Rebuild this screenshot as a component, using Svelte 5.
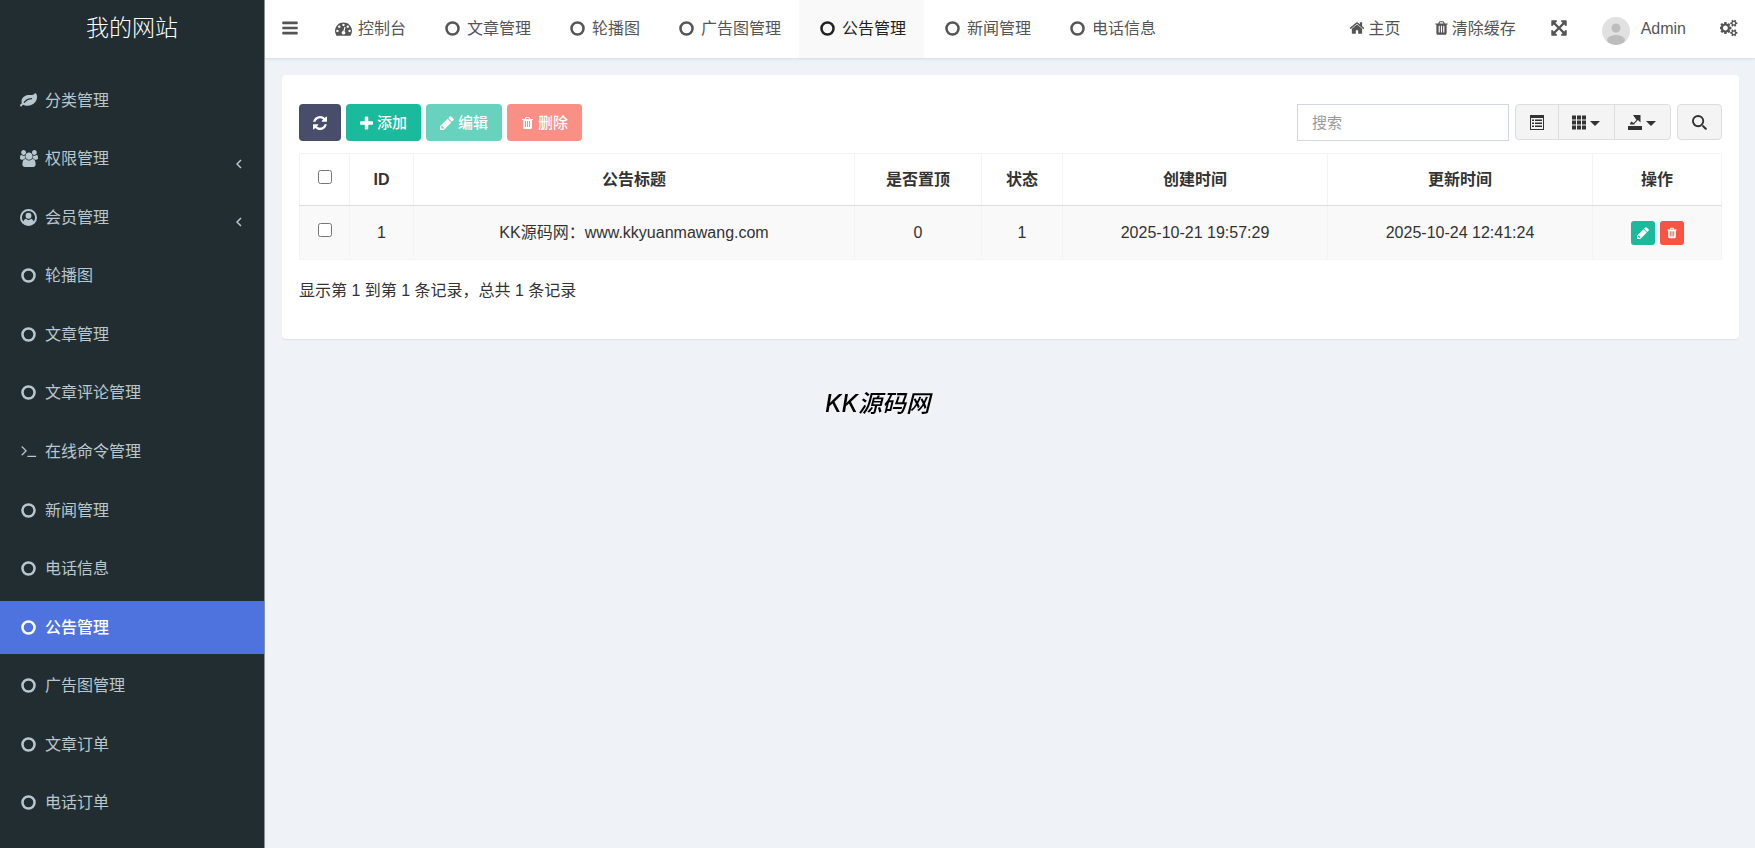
<!-- src/lib/components/NoticeAdmin.svelte -->
<script lang="ts">
  interface MenuItem {
    label: string;
    icon: string;
    children?: boolean;
  }

  interface Notice {
    id: number;
    title: string;
    top: number;
    status: number;
    created: string;
    updated: string;
  }

  const MENU: MenuItem[] = [
    { label: '分类管理', icon: 'leaf' },
    { label: '权限管理', icon: 'group', children: true },
    { label: '会员管理', icon: 'user', children: true },
    { label: '轮播图', icon: 'circle' },
    { label: '文章管理', icon: 'circle' },
    { label: '文章评论管理', icon: 'circle' },
    { label: '在线命令管理', icon: 'terminal' },
    { label: '新闻管理', icon: 'circle' },
    { label: '电话信息', icon: 'circle' },
    { label: '公告管理', icon: 'circle' },
    { label: '广告图管理', icon: 'circle' },
    { label: '文章订单', icon: 'circle' },
    { label: '电话订单', icon: 'circle' },
  ];

  const TABS: MenuItem[] = [
    { label: '控制台', icon: 'dashboard' },
    { label: '文章管理', icon: 'circle' },
    { label: '轮播图', icon: 'circle' },
    { label: '广告图管理', icon: 'circle' },
    { label: '公告管理', icon: 'circle' },
    { label: '新闻管理', icon: 'circle' },
    { label: '电话信息', icon: 'circle' },
  ];

  const rows: Notice[] = [
    {
      id: 1,
      title: 'KK源码网：www.kkyuanmawang.com',
      top: 0,
      status: 1,
      created: '2025-10-21 19:57:29',
      updated: '2025-10-24 12:41:24',
    },
  ];

  let current = $state('公告管理');
  let keyword = $state('');
  let selected = $state<number[]>([]);

  const allSelected = $derived(selected.length === rows.length);

  function toggleAll() {
    selected = allSelected ? [] : rows.map((r) => r.id);
  }

  // Icon outlines on a 1792 unit grid
  const ICONS: Record<string, { box?: string; d: string }> = {
    leaf: {
      d: 'M1280 704q0-26-19-45t-45-19q-172 0-318 49.5t-259.5 134-235.5 219.5q-19 21-19 45 0 26 19 45t45 19q24 0 45-19 27-24 74-71t67-66q137-124 268.5-176t313.5-52q26 0 45-19t19-45zm512-198q0 95-20 193-46 224-184.5 383t-357.5 268q-214 108-438 108-148 0-286-47-15-5-88-42t-96-37q-16 0-39.5 32t-45 70-52.5 70-60 32q-43 0-63.5-17.5t-45.5-59.5q-2-4-6-11t-5.5-10-3-9.5-1.5-13.5q0-35 31-73.5t68-65.5 68-56 31-48q0-4-14-38t-16-44q-9-51-9-104 0-115 43.5-220t119-184.5 170.5-139 204-95.5q55-18 145-25.5t179.5-9 178.5-6 163.5-24 113.5-56.5l29.5-29.5 29.5-28 27-20 36.5-16 43.5-4.5q39 0 70.5 46t47.5 112 24 124 8 96z',
    },
    group: {
      box: '64 0 1920 1792',
      d: 'M657 896q-162 5-265 128h-134q-82 0-138-40.5t-56-118.5q0-353 124-353 6 0 43.5 21t97.5 42.5 119 21.5q67 0 133-23-5 37-5 66 0 139 81 256zm1071 637q0 120-73 189.5t-194 69.5h-874q-121 0-194-69.5t-73-189.5q0-53 3.5-103.5t14-109 26.5-108.5 43-97.5 62-81 85.5-53.5 111.5-20q10 0 43 21.5t73 48 107 48 135 21.5 135-21.5 107-48 73-48 43-21.5q61 0 111.5 20t85.5 53.5 62 81 43 97.5 26.5 108.5 14 109 3.5 103.5zm-1024-1277q0 106-75 181t-181 75-181-75-75-181 75-181 181-75 181 75 75 181zm704 384q0 159-112.5 271.5t-271.5 112.5-271.5-112.5-112.5-271.5 112.5-271.5 271.5-112.5 271.5 112.5 112.5 271.5zm576 225q0 78-56 118.5t-138 40.5h-134q-103-123-265-128 81-117 81-256 0-29-5-66 66 23 133 23 59 0 119-21.5t97.5-42.5 43.5-21q124 0 124 353zm-128-609q0 106-75 181t-181 75-181-75-75-181 75-181 181-75 181 75 75 181z',
    },
    user: {
      d: 'M896 0a896 896 0 1 0 0 1792a896 896 0 1 0 0-1792zM896 210a686 686 0 0 1 530 1120c-40-160-130-260-270-290a370 370 0 0 1-520 0c-140 30-230 130-270 290a686 686 0 0 1 530-1120zM896 400a310 320 0 1 0 0 640a310 320 0 1 0 0-640z',
    },
    circle: {
      d: 'M896 128a768 768 0 1 0 0 1536a768 768 0 1 0 0-1536zM896 392a504 504 0 1 1 0 1008a504 504 0 1 1 0-1008z',
    },
    terminal: {
      d: 'M130 420l80-80q24-20 48 0l465 465q24 24 0 48l-465 465q-24 20-48 0l-50-50q-24-24 0-48l391-391-391-391q-24-20-30-18zM1700 1376v64q0 32-32 32h-860q-32 0-32-32v-64q0-32 32-32h860q32 0 32 32z',
    },
    bars: {
      d: 'M1664 1344v128q0 26-19 45t-45 19h-1408q-26 0-45-19t-19-45v-128q0-26 19-45t45-19h1408q26 0 45 19t19 45zm0-512v128q0 26-19 45t-45 19h-1408q-26 0-45-19t-19-45v-128q0-26 19-45t45-19h1408q26 0 45 19t19 45zm0-512v128q0 26-19 45t-45 19h-1408q-26 0-45-19t-19-45v-128q0-26 19-45t45-19h1408q26 0 45 19t19 45z',
    },
    dashboard: {
      d: 'M384 1152q0-53-37.5-90.5t-90.5-37.5-90.5 37.5-37.5 90.5 37.5 90.5 90.5 37.5 90.5-37.5 37.5-90.5zm192-448q0-53-37.5-90.5t-90.5-37.5-90.5 37.5-37.5 90.5 37.5 90.5 90.5 37.5 90.5-37.5 37.5-90.5zm428 481l101-382q6-26-7.5-48.5t-38.5-29.5-48 6.5-30 39.5l-101 382q-60 5-107 43.5t-63 98.5q-20 77 20 146t117 89 146-20 89-117q16-60-6-117t-72-91zm660-33q0-53-37.5-90.5t-90.5-37.5-90.5 37.5-37.5 90.5 37.5 90.5 90.5 37.5 90.5-37.5 37.5-90.5zm-640-640q0-53-37.5-90.5t-90.5-37.5-90.5 37.5-37.5 90.5 37.5 90.5 90.5 37.5 90.5-37.5 37.5-90.5zm448 192q0-53-37.5-90.5t-90.5-37.5-90.5 37.5-37.5 90.5 37.5 90.5 90.5 37.5 90.5-37.5 37.5-90.5zm320 448q0 261-141 483-19 29-54 29h-1402q-35 0-54-29-141-221-141-483 0-182 71-348t191-286 286-191 348-71 348 71 286 191 191 286 71 348z',
    },
    home: {
      d: 'M1472 992v480q0 26-19 45t-45 19h-384v-384h-256v384h-384q-26 0-45-19t-19-45v-480q0-1 .5-3t.5-3l575-474 575 474q1 2 1 6zm223-69l-62 74q-8 9-21 11h-3q-13 0-21-7l-692-577-692 577q-12 8-24 7-13-2-21-11l-62-74q-8-10-7-23.5t11-21.5l719-599q32-26 76-26t76 26l244 204v-195q0-14 9-23t23-9h192q14 0 23 9t9 23v408l219 182q10 8 11 21.5t-7 23.5z',
    },
    trash: {
      box: '192 0 1408 1792',
      d: 'M704 1376v-704q0-14-9-23t-23-9h-64q-14 0-23 9t-9 23v704q0 14 9 23t23 9h64q14 0 23-9t9-23zm256 0v-704q0-14-9-23t-23-9h-64q-14 0-23 9t-9 23v704q0 14 9 23t23 9h64q14 0 23-9t9-23zm256 0v-704q0-14-9-23t-23-9h-64q-14 0-23 9t-9 23v704q0 14 9 23t23 9h64q14 0 23-9t9-23zm-544-992h448l-48-117q-7-9-17-11h-317q-10 2-17 11zm928 32v64q0 14-9 23t-23 9h-96v948q0 83-47 143.5t-113 60.5h-832q-66 0-113-58.5t-47-141.5v-952h-96q-14 0-23-9t-9-23v-64q0-14 9-23t23-9h309l70-167q15-37 54-63t79-26h320q40 0 79 26t54 63l70 167h309q14 0 23 9t9 23z',
    },
    expand: {
      d: 'M1411 541l-355 355 355 355 144-144q29-31 70-14 39 17 39 59v448q0 26-19 45t-45 19h-448q-42 0-59-40-17-39 14-69l144-144-355-355-355 355 144 144q31 30 14 69-17 40-59 40h-448q-26 0-45-19t-19-45v-448q0-42 40-59 39-17 69 14l144 144 355-355-355-355-144 144q-19 19-45 19-12 0-24-5-40-17-40-59v-448q0-26 19-45t45-19h448q42 0 59 40 17 39-14 69l-144 144 355 355 355-355-144-144q-31-30-14-69 17-40 59-40h448q26 0 45 19t19 45v448q0 42-39 59-13 5-25 5-26 0-45-19z',
    },
    cogs: {
      box: '0 0 1920 1792',
      d: 'M832 896q0-106-75-181t-181-75-181 75-75 181 75 181 181 75 181-75 75-181zm768 512q0-52-38-90t-90-38-90 38-38 90q0 53 37.5 90.5t90.5 37.5 90.5-37.5 37.5-90.5zm0-1024q0-52-38-90t-90-38-90 38-38 90q0 53 37.5 90.5t90.5 37.5 90.5-37.5 37.5-90.5zm-384 421v185q0 10-7 19.5t-16 10.5l-155 24q-11 35-32 76 34 48 90 115 7 11 7 20 0 12-7 19-23 30-82.5 89.5t-78.5 59.5q-11 0-21-7l-115-90q-37 19-77 31-11 108-23 155-7 24-30 24h-186q-11 0-20-7.5t-10-17.5l-23-153q-34-10-75-31l-118 89q-7 7-20 7-11 0-21-8-144-133-144-160 0-9 7-19 10-14 41-53t47-61q-23-44-35-82l-152-24q-10-1-17-9.5t-7-19.5v-185q0-10 7-19.5t16-10.5l155-24q11-35 32-76-34-48-90-115-7-11-7-20 0-12 7-20 22-30 82-89t79-59q11 0 21 7l115 90q34-18 77-32 11-108 23-154 7-24 30-24h186q11 0 20 7.5t10 17.5l23 153q34 10 75 31l118-89q8-7 20-7 11 0 21 8 144 133 144 160 0 8-7 19-12 16-42 54t-45 60q23 48 34 82l152 23q10 2 17 10.5t7 19.5zm640 533v140q0 16-149 31-12 27-30 52 51 113 51 138 0 4-4 7-122 71-124 71-8 0-46-47t-52-68q-20 2-30 2t-30-2q-14 21-52 68t-46 47q-2 0-124-71-4-3-4-7 0-25 51-138-18-25-30-52-149-15-149-31v-140q0-16 149-31 13-29 30-52-51-113-51-138 0-4 4-7 4-2 35-20t59-34 30-16q8 0 46 46.5t52 67.5q20-2 30-2t30 2q51-71 92-112l6-2q4 0 124 70 4 3 4 7 0 25-51 138 17 23 30 52 149 15 149 31zm0-1024v140q0 16-149 31-12 27-30 52 51 113 51 138 0 4-4 7-122 71-124 71-8 0-46-47t-52-68q-20 2-30 2t-30-2q-14 21-52 68t-46 47q-2 0-124-71-4-3-4-7 0-25 51-138-18-25-30-52-149-15-149-31v-140q0-16 149-31 13-29 30-52-51-113-51-138 0-4 4-7 4-2 35-20t59-34 30-16q8 0 46 46.5t52 67.5q20-2 30-2t30 2q51-71 92-112l6-2q4 0 124 70 4 3 4 7 0 25-51 138 17 23 30 52 149 15 149 31z',
    },
    refresh: {
      box: '128 128 1536 1536',
      d: 'M1639 1056q0 5-1 7-64 268-268 434.5t-478 166.5q-146 0-282.5-55t-243.5-157l-129 129q-19 19-45 19t-45-19-19-45v-448q0-26 19-45t45-19h448q26 0 45 19t19 45-19 45l-137 137q71 66 161 102t187 36q134 0 250-65t186-179q11-17 53-117 8-23 30-23h192q13 0 22.5 9.5t9.5 22.5zm25-800v448q0 26-19 45t-45 19h-448q-26 0-45-19t-19-45 19-45l138-138q-148-137-349-137-134 0-250 65t-186 179q-11 17-53 117-8 23-30 23h-199q-13 0-22.5-9.5t-9.5-22.5v-7q65-268 270-434.5t480-166.5q146 0 284 55.5t245 156.5l130-129q19-19 45-19t45 19 19 45z',
    },
    plus: {
      box: '192 128 1408 1408',
      d: 'M1600 736v192q0 40-28 68t-68 28h-416v416q0 40-28 68t-68 28h-192q-40 0-68-28t-28-68v-416h-416q-40 0-68-28t-28-68v-192q0-40 28-68t68-28h416v-416q0-40 28-68t68-28h192q40 0 68 28t28 68v416h416q40 0 68 28t28 68z',
    },
    pencil: {
      box: '128 128 1536 1536',
      d: 'M491 1536l91-91-235-235-91 91v107h128v128h107zM960 416l416 416-832 832h-416v-416zm683 96q0 53-37 90l-166 166-416-416 166-165q36-38 90-38 53 0 91 38l235 234q37 39 37 91z',
    },
    // Toolbar glyphs use a 14 unit grid
    detail: {
      box: '0 0 14 15',
      d: 'M0 0h14v15h-14zM1 3v11h12v-11zM2 4.500h2v1.500h-2zM5 4.500h7v1.500h-7zM2 7.500h2v1.500h-2zM5 7.500h7v1.500h-7zM2 10.500h2v1.500h-2zM5 10.500h7v1.500h-7z',
    },
    columns: {
      box: '0 0 14 14',
      d: 'M0 0h4v4h-4zM5 0h4v4h-4zM10 0h4v4h-4zM0 5h4v4h-4zM5 5h4v4h-4zM10 5h4v4h-4zM0 10h4v4h-4zM5 10h4v4h-4zM10 10h4v4h-4z',
    },
    export: {
      box: '0 0 14 15',
      d: 'M0 11h14v4h-14zM5 0h7.500v7.500l-2.500-2.500l-3.500 3.500v1h-4.500q0-2 1.500-3l2 1.500l3-3z',
    },
    search: {
      box: '0 0 16 16',
      d: 'M6.500 0a6.500 6.500 0 1 0 0 13a6.500 6.500 0 1 0 0-13zM6.500 2a4.500 4.500 0 1 1 0 9a4.500 4.500 0 1 1 0-9zM10 11.500l1.500-1.500l4 3.800q.8 1 0 1.700t-1.700 0z',
    },
  };
</script>

{#snippet icon(name: string)}
  <svg class="icon icon-{name}" viewBox={ICONS[name].box ?? '0 0 1792 1792'} aria-hidden="true">
    <path d={ICONS[name].d} fill="currentColor" fill-rule="evenodd" />
  </svg>
{/snippet}

<div class="app">
  <aside class="sidebar">
    <a class="logo" href="#home">我的网站</a>
    <nav class="menu" aria-label="菜单">
      {#each MENU as item (item.label)}
        <a
          class="menu-item"
          class:active={current === item.label}
          href="#{item.label}"
          onclick={() => (current = item.label)}
        >
          <span class="menu-icon">{@render icon(item.icon)}</span>
          <span class="menu-label">{item.label}</span>
          {#if item.children}
            <svg class="angle" viewBox="0 0 6 10" aria-hidden="true">
              <path d="M5 1L1 5l4 4" fill="none" stroke="currentColor" stroke-width="1.5" />
            </svg>
          {/if}
        </a>
      {/each}
    </nav>
  </aside>

  <div class="page">
    <header class="navbar">
      <button class="toggle" type="button" aria-label="切换菜单">{@render icon('bars')}</button>
      <nav class="tabs" aria-label="标签页">
        {#each TABS as tab (tab.label)}
          <a
            class="tab"
            class:active={current === tab.label}
            href="#{tab.label}"
            onclick={() => (current = tab.label)}
          >
            <span class="tab-icon">{@render icon(tab.icon)}</span>
            {tab.label}
          </a>
        {/each}
      </nav>
      <div class="nav-right">
        <a class="nav-link" href="#index">{@render icon('home')}主页</a>
        <a class="nav-link" href="#wipe">{@render icon('trash')}清除缓存</a>
        <button class="nav-link" type="button" aria-label="全屏">{@render icon('expand')}</button>
        <a class="nav-link user" href="#profile">
          <svg class="avatar" viewBox="0 0 28 28" aria-hidden="true">
            <clipPath id="avatar-clip"><circle cx="14" cy="14" r="14" /></clipPath>
            <g clip-path="url(#avatar-clip)">
              <rect width="28" height="28" fill="#e1e1e1" />
              <circle cx="14" cy="11" r="4.500" fill="#bdbdbd" />
              <ellipse cx="14" cy="23" rx="9" ry="5" fill="#bdbdbd" />
            </g>
          </svg>
          Admin
        </a>
        <button class="nav-link" type="button" aria-label="设置">{@render icon('cogs')}</button>
      </div>
    </header>

    <main class="content">
      <section class="panel">
        <div class="toolbar">
          <div class="actions">
            <button class="btn btn-primary" type="button" aria-label="刷新">{@render icon('refresh')}</button>
            <button class="btn btn-success" type="button">{@render icon('plus')}添加</button>
            <button class="btn btn-success" type="button" disabled={selected.length === 0}>
              {@render icon('pencil')}编辑
            </button>
            <button class="btn btn-danger" type="button" disabled={selected.length === 0}>
              {@render icon('trash')}删除
            </button>
          </div>
          <div class="tools">
            <input class="search" type="text" placeholder="搜索" aria-label="搜索" bind:value={keyword} />
            <div class="btn-group">
              <button class="btn-default" type="button" aria-label="切换">{@render icon('detail')}</button>
              <button class="btn-default" type="button" aria-label="列">
                {@render icon('columns')}<span class="caret"></span>
              </button>
              <button class="btn-default" type="button" aria-label="导出数据">
                {@render icon('export')}<span class="caret"></span>
              </button>
            </div>
            <button class="btn-default btn-search" type="button" aria-label="普通搜索">
              {@render icon('search')}
            </button>
          </div>
        </div>

        <table class="table">
          <colgroup>
            <col class="col-check" />
            <col class="col-id" />
            <col />
            <col class="col-top" />
            <col class="col-status" />
            <col class="col-time" />
            <col class="col-time" />
            <col class="col-operate" />
          </colgroup>
          <thead>
            <tr>
              <th><input type="checkbox" aria-label="全选" checked={allSelected} onchange={toggleAll} /></th>
              <th>ID</th>
              <th>公告标题</th>
              <th>是否置顶</th>
              <th>状态</th>
              <th>创建时间</th>
              <th>更新时间</th>
              <th>操作</th>
            </tr>
          </thead>
          <tbody>
            {#each rows as row (row.id)}
              <tr>
                <td>
                  <input type="checkbox" aria-label="选择 {row.id}" value={row.id} bind:group={selected} />
                </td>
                <td>{row.id}</td>
                <td>{row.title}</td>
                <td>{row.top}</td>
                <td>{row.status}</td>
                <td>{row.created}</td>
                <td>{row.updated}</td>
                <td>
                  <div class="operate">
                    <button class="btn-xs btn-success" type="button" aria-label="编辑">{@render icon('pencil')}</button>
                    <button class="btn-xs btn-danger" type="button" aria-label="删除">{@render icon('trash')}</button>
                  </div>
                </td>
              </tr>
            {/each}
          </tbody>
        </table>

        <p class="pagination-info">显示第 1 到第 {rows.length} 条记录，总共 {rows.length} 条记录</p>
      </section>
    </main>
  </div>

  <div class="watermark">KK源码网</div>
</div>

<style>
  :global(body) {
    background: #eff3f7;
  }

  .app {
    display: flex;
    min-height: 100vh;
    font-family: 'Liberation Sans', 'Noto Sans CJK SC', sans-serif;
    font-size: 16px;
    line-height: 24px;
    color: #333;
  }

  .app * {
    box-sizing: border-box;
  }

  a {
    color: inherit;
    text-decoration: none;
  }

  button {
    font: inherit;
    cursor: pointer;
  }

  .icon {
    display: block;
    flex: none;
    width: 16px;
    height: 16px;
  }

  /* ── Sidebar ── */
  .sidebar {
    display: flex;
    flex-direction: column;
    flex: none;
    width: 265px;
    padding-bottom: 18px;
    background: #222d32;
    border-right: 1px solid #8a9195;
    color: #b8c7ce;
  }

  .logo {
    height: 58px;
    line-height: 56px;
    font-size: 23px;
    font-weight: 300;
    text-align: center;
    color: #fff;
  }

  .menu {
    display: flex;
    flex: 1;
    flex-direction: column;
    justify-content: space-between;
    gap: 4px;
    padding-top: 16px;
  }

  .menu-item {
    display: flex;
    align-items: center;
    gap: 8px;
    height: 53px;
    padding: 0 22px 0 20px;
  }

  .menu-item.active {
    background: #4e73df;
    color: #fff;
    font-weight: 500;
  }

  .menu-icon {
    display: flex;
    justify-content: center;
    width: 17px;
    margin-bottom: 1px;
  }

  .menu-icon .icon {
    width: 17px;
    height: 17px;
  }

  .menu-icon .icon-group {
    width: 18px;
  }

  .menu-label {
    flex: 1;
  }

  .angle {
    width: 6px;
    height: 10px;
    margin-top: 9px;
  }

  /* ── Navbar ── */
  .page {
    flex: 1;
    min-width: 0;
  }

  .navbar {
    display: flex;
    height: 59px;
    background: #fff;
    border-bottom: 1px solid #dce3ea;
    box-shadow: 0 1px 2px rgba(0, 21, 41, 0.06);
    color: #555;
  }

  .navbar .icon {
    margin-bottom: 2px;
  }

  .toggle {
    display: flex;
    align-items: center;
    justify-content: center;
    width: 50px;
    padding: 0;
    border: 0;
    background: none;
    color: #555;
  }

  .toggle .icon {
    width: 18px;
    height: 18px;
  }

  .tabs {
    display: flex;
    flex: 1;
  }

  .tab {
    display: flex;
    align-items: center;
    gap: 6px;
    padding: 0 18px 0 20px;
    white-space: nowrap;
  }

  .tab-icon {
    display: flex;
    justify-content: center;
    width: 17px;
  }

  .tab-icon .icon {
    width: 17px;
    height: 17px;
  }

  .tab.active {
    background: #f9f9f9;
    color: #222;
  }

  .nav-right {
    display: flex;
  }

  .nav-link {
    display: flex;
    align-items: center;
    gap: 4px;
    padding: 0 17px;
    border: 0;
    background: none;
    color: #555;
    white-space: nowrap;
  }

  .nav-link .icon-trash {
    width: 13px;
  }

  .nav-link .icon-expand,
  .nav-link .icon-cogs {
    width: 18px;
    height: 18px;
  }

  .user {
    gap: 11px;
  }

  .avatar {
    width: 28px;
    height: 28px;
    margin-top: 3px;
  }

  /* ── Panel ── */
  .content {
    padding: 16px 16px 17px 17px;
  }

  .panel {
    padding: 29px 17px 36px;
    background: #fff;
    border-radius: 4px;
    box-shadow: 0 1px 1px rgba(0, 0, 0, 0.08);
  }

  .toolbar {
    display: flex;
    justify-content: space-between;
    margin-bottom: 12px;
  }

  .actions,
  .tools {
    display: flex;
  }

  .actions {
    gap: 5px;
  }

  .tools {
    gap: 6px;
  }

  .btn {
    display: flex;
    align-items: center;
    gap: 4px;
    height: 37px;
    padding: 0 14px;
    border: 0;
    border-radius: 4px;
    font-size: 15px;
    font-weight: 500;
    color: #fff;
  }

  .btn .icon {
    width: 14px;
    height: 14px;
  }

  .btn .icon-plus,
  .btn .icon-trash {
    width: 13px;
  }

  .btn:disabled {
    opacity: 0.65;
    cursor: not-allowed;
  }

  .btn-primary {
    background: #474d6b;
  }

  .btn-success {
    background: #1abb9c;
  }

  .btn-danger {
    background: #f75444;
  }

  .search {
    width: 212px;
    height: 37px;
    padding: 0 14px;
    border: 1px solid #d2d6de;
    font: inherit;
    font-size: 15px;
    color: #555;
  }

  .search::placeholder {
    color: #999;
  }

  .btn-group {
    display: flex;
  }

  .btn-default {
    display: flex;
    align-items: center;
    gap: 4px;
    height: 36px;
    padding: 0 14px;
    border: 1px solid #ddd;
    background: #f4f4f4;
    color: #333;
  }

  .btn-group .btn-default:not(:first-child) {
    padding: 0 14px 0 13px;
    margin-left: -1px;
  }

  .btn-default .icon {
    width: 14px;
    height: 15px;
  }

  .btn-default .icon-search {
    width: 15px;
  }

  .btn-group .btn-default:first-child {
    border-radius: 4px 0 0 4px;
  }

  .btn-group .btn-default:last-child {
    border-radius: 0 4px 4px 0;
  }

  .btn-search {
    border-radius: 4px;
  }

  .caret {
    margin-top: 3px;
    border-top: 5px solid;
    border-right: 5px solid transparent;
    border-left: 5px solid transparent;
  }

  /* ── Table ── */
  .table {
    width: 100%;
    table-layout: fixed;
    border-collapse: collapse;
    text-align: center;
  }

  .col-check {
    width: 50px;
  }

  .col-id {
    width: 64px;
  }

  .col-top {
    width: 127px;
  }

  .col-status {
    width: 81px;
  }

  .col-time {
    width: 265px;
  }

  .col-operate {
    width: 129px;
  }

  th,
  td {
    height: 52px;
    padding: 0;
    border: 1px solid #f4f4f4;
  }

  th {
    border-bottom-color: #ddd;
    font-weight: 700;
  }

  td {
    height: 54px;
    background: #f9f9f9;
  }

  th input,
  td input {
    display: block;
    width: 14px;
    height: 14px;
    margin: 0 auto 5px;
  }

  .operate {
    display: flex;
    justify-content: center;
    gap: 5px;
  }

  .btn-xs {
    display: flex;
    align-items: center;
    justify-content: center;
    width: 24px;
    height: 24px;
    padding: 0;
    border: 0;
    border-radius: 3px;
    color: #fff;
  }

  .btn-xs .icon {
    width: 12px;
    height: 12px;
  }

  .pagination-info {
    margin: 19px 0 0;
  }

  /* ── Watermark ── */
  .watermark {
    position: fixed;
    top: 47.7%;
    left: 50%;
    transform: translate(-50%, -50%);
    font-family: Inter, 'Noto Sans CJK SC', sans-serif;
    font-size: 24px;
    font-style: italic;
    font-weight: 500;
    color: #000;
    white-space: nowrap;
    pointer-events: none;
  }
</style>
